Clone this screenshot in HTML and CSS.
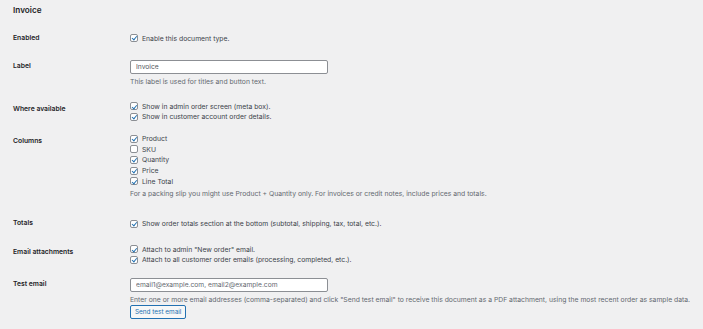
FILE: index.html
```html
<!DOCTYPE html>
<html lang="en">
<head>
    <meta charset="UTF-8">
    <meta name="viewport" content="width=device-width, initial-scale=1.0">
    <title>Invoice settings</title>
    <link rel="stylesheet" href="styles.css">
</head>
<body>
    <div class="wrap">
        <h2 class="section-title">Invoice</h2>

        <!-- Enabled -->
        <div class="form-row">
            <div class="row-label">Enabled</div>
            <div class="row-field">
                <label class="option"><input type="checkbox" class="check" checked> Enable this document type.</label>
            </div>
        </div>

        <!-- Label -->
        <div class="form-row">
            <div class="row-label">Label</div>
            <div class="row-field has-input">
                <input type="text" class="text-input" value="Invoice">
                <p class="description">This label is used for titles and button text.</p>
            </div>
        </div>

        <!-- Where available -->
        <div class="form-row">
            <div class="row-label">Where available</div>
            <div class="row-field multi">
                <label class="option"><input type="checkbox" class="check" checked> Show in admin order screen (meta box).</label>
                <label class="option"><input type="checkbox" class="check" checked> Show in customer account order details.</label>
            </div>
        </div>

        <!-- Columns -->
        <div class="form-row">
            <div class="row-label">Columns</div>
            <div class="row-field multi">
                <label class="option"><input type="checkbox" class="check" checked> Product</label>
                <label class="option"><input type="checkbox" class="check"> SKU</label>
                <label class="option"><input type="checkbox" class="check" checked> Quantity</label>
                <label class="option"><input type="checkbox" class="check" checked> Price</label>
                <label class="option"><input type="checkbox" class="check" checked> Line Total</label>
                <p class="description">For a packing slip you might use Product + Quantity only. For invoices or credit notes, include prices and totals.</p>
            </div>
        </div>

        <!-- Totals -->
        <div class="form-row">
            <div class="row-label">Totals</div>
            <div class="row-field">
                <label class="option"><input type="checkbox" class="check" checked> Show order totals section at the bottom (subtotal, shipping, tax, total, etc.).</label>
            </div>
        </div>

        <!-- Email attachments -->
        <div class="form-row">
            <div class="row-label">Email attachments</div>
            <div class="row-field multi">
                <label class="option"><input type="checkbox" class="check" checked> Attach to admin "New order" email.</label>
                <label class="option"><input type="checkbox" class="check" checked> Attach to all customer order emails (processing, completed, etc.).</label>
            </div>
        </div>

        <!-- Test email -->
        <div class="form-row">
            <div class="row-label">Test email</div>
            <div class="row-field has-input">
                <input type="text" class="text-input" placeholder="email1@example.com, email2@example.com">
                <p class="description">Enter one or more email addresses (comma-separated) and click "Send test email" to receive this document as a PDF attachment, using the most recent order as sample data.</p>
                <button type="button" class="button">Send test email</button>
            </div>
        </div>
    </div>
</body>
</html>
```

FILE: styles.css
```css
body {
    margin: 0;
    background-color: #f0f0f1;
    font-family: Inter, "Noto Sans", sans-serif;
    font-size: 6.8px;
    color: #3c434a;
}
.wrap {
    padding: 0 13px;
}
.section-title {
    font-size: 8.2px;
    font-weight: 600;
    color: #1d2327;
    line-height: 11px;
    margin: 0 0 7.5px;
    padding-top: 5.2px;
}
.form-row {
    display: grid;
    grid-template-columns: 117px 1fr;
    align-items: start;
}
.row-label {
    padding: 9px 0;
    line-height: 10.7px;
    font-weight: 600;
    color: #1d2327;
}
.row-field {
    padding: 9px 0;
}
.row-field.multi {
    padding: 6px 0 5px;
}
.row-field.has-input {
    padding: 8px 0 7.5px;
}
.option {
    display: flex;
    align-items: center;
    height: 10.7px;
    white-space: nowrap;
}
.check {
    appearance: none;
    -webkit-appearance: none;
    position: relative;
    width: 8px;
    height: 8px;
    margin: 0 4px 0 0;
    border: 1px solid #8c8f94;
    border-radius: 2px;
    background-color: #fff;
    box-sizing: border-box;
    flex-shrink: 0;
}
.check:checked::before {
    content: "";
    position: absolute;
    left: 2px;
    top: 0.3px;
    width: 1.8px;
    height: 3.8px;
    border: solid #2271b1;
    border-width: 0 1.3px 1.3px 0;
    transform: rotate(40deg);
}
.text-input {
    display: block;
    box-sizing: border-box;
    width: 198px;
    height: 14px;
    margin: 0;
    padding: 0 5px;
    border: 1px solid #8c8f94;
    border-radius: 2px;
    background-color: #fff;
    font-family: inherit;
    font-size: 6.7px;
    color: #50575e;
}
.text-input::placeholder {
    color: #646970;
}
.description {
    margin: 2px 0 1px;
    line-height: 8px;
    font-size: 6.8px;
    color: #646970;
    white-space: nowrap;
}
.text-input + .description {
    margin-top: 4px;
}
.row-field.multi .description {
    margin: 3.5px 0 6px;
}
.button {
    display: block;
    height: 14px;
    padding: 0 4px;
    border: 1px solid #2271b1;
    border-radius: 2px;
    background-color: #f6f7f7;
    color: #2271b1;
    font-family: inherit;
    font-size: 6.4px;
    cursor: pointer;
}
```
